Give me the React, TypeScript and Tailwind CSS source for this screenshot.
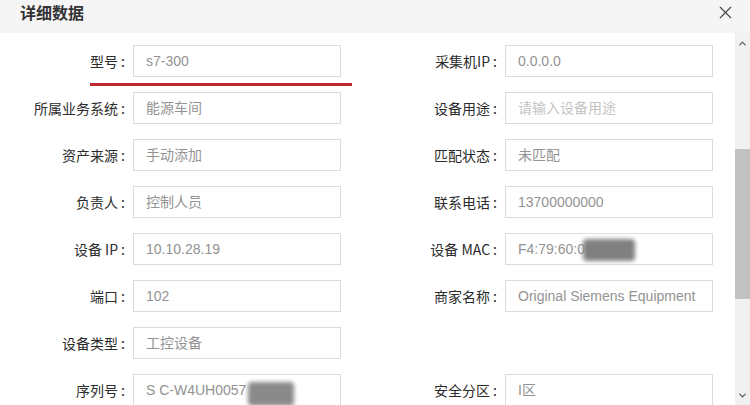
import { X, ChevronUp, ChevronDown } from 'lucide-react';

type Field = { label: string; value?: string; placeholder?: string; mask?: string };

const rows: [Field, Field | null][] = [
  [{ label: '型号', value: 's7-300' }, { label: '采集机IP', value: '0.0.0.0' }],
  [{ label: '所属业务系统', value: '能源车间' }, { label: '设备用途', placeholder: '请输入设备用途' }],
  [{ label: '资产来源', value: '手动添加' }, { label: '匹配状态', value: '未匹配' }],
  [{ label: '负责人', value: '控制人员' }, { label: '联系电话', value: '13700000000' }],
  [{ label: '设备 IP', value: '10.10.28.19' }, { label: '设备 MAC', value: 'F4:79:60:0', mask: 'mac' }],
  [{ label: '端口', value: '102' }, { label: '商家名称', value: 'Original Siemens Equipment' }],
  [{ label: '设备类型', value: '工控设备' }, null],
  [{ label: '序列号', value: 'S C-W4UH0057', mask: 'sn' }, { label: '安全分区', value: 'I区' }],
];

const font = "font-['Liberation_Sans','Noto_Sans_CJK_SC',sans-serif]";

const FieldCell = ({ f }: { f: Field }) => (
  <div className="flex items-center">
    <div className="w-[125px] flex justify-end items-center text-[14px] text-[#2b2b2b] font-['Noto_Sans_CJK_SC',sans-serif] leading-none">
      <span>{f.label}</span>
      <span className="ml-[3px]">:</span>
    </div>
    <div className="relative ml-[8px] w-[208px] h-[32px] border border-[#dcdcdc] bg-white flex items-center pl-3 overflow-hidden">
      {f.value ? (
        <span className={`text-[14px] text-[#939393] whitespace-nowrap ${font}`}>{f.value}</span>
      ) : (
        <span className={`text-[14px] text-[#c4c4c4] whitespace-nowrap ${font}`}>{f.placeholder}</span>
      )}
      {f.mask === 'mac' && (
        <div className="absolute left-[77px] top-[5px] w-[52px] h-[22px] bg-[#808080] rounded-[4px] blur-[2px]" />
      )}
      {f.mask === 'sn' && (
        <div className="absolute left-[114px] top-[7px] w-[46px] h-[24px] bg-[#8a8a8a] rounded-[4px] blur-[2px]" />
      )}
    </div>
  </div>
);

export default function App() {
  return (
    <div className="w-[750px] h-[405px] overflow-hidden bg-white flex flex-col">
      <div className="h-[33px] shrink-0 bg-[#f5f5f5] flex items-start justify-between pl-[20px] pr-[14px] pt-[1px]">
        <span className="text-[16px] font-bold text-[#333] font-['Noto_Sans_CJK_SC',sans-serif] leading-[22px]">
          详细数据
        </span>
        <X size={21} strokeWidth={1.3} className="text-[#444] mt-[1px]" />
      </div>
      <div className="flex flex-1 min-h-0">
        <div className="w-[733px] pt-[12px] flex flex-col gap-[15px]">
          {rows.map(([l, r], i) => (
            <div key={i} className="relative flex h-[32px]">
              <div className="w-[372px]">
                <FieldCell f={l} />
              </div>
              {r && <FieldCell f={r} />}
              {i === 0 && (
                <div className="absolute left-[90px] top-[38px] w-[262px] h-[3px] bg-[#bf2a30]" />
              )}
            </div>
          ))}
        </div>
        <div className="w-[17px] bg-[#f1f1f1] border-l-2 border-white flex flex-col items-center">
          <ChevronUp size={11} strokeWidth={2.5} className="text-[#555] mt-[5px]" />
          <div className="mt-[100px] w-full h-[150px] bg-[#c1c1c1]" />
          <div className="flex-1" />
          <ChevronDown size={11} strokeWidth={2.5} className="text-[#555] mb-[4px]" />
        </div>
      </div>
    </div>
  );
}
